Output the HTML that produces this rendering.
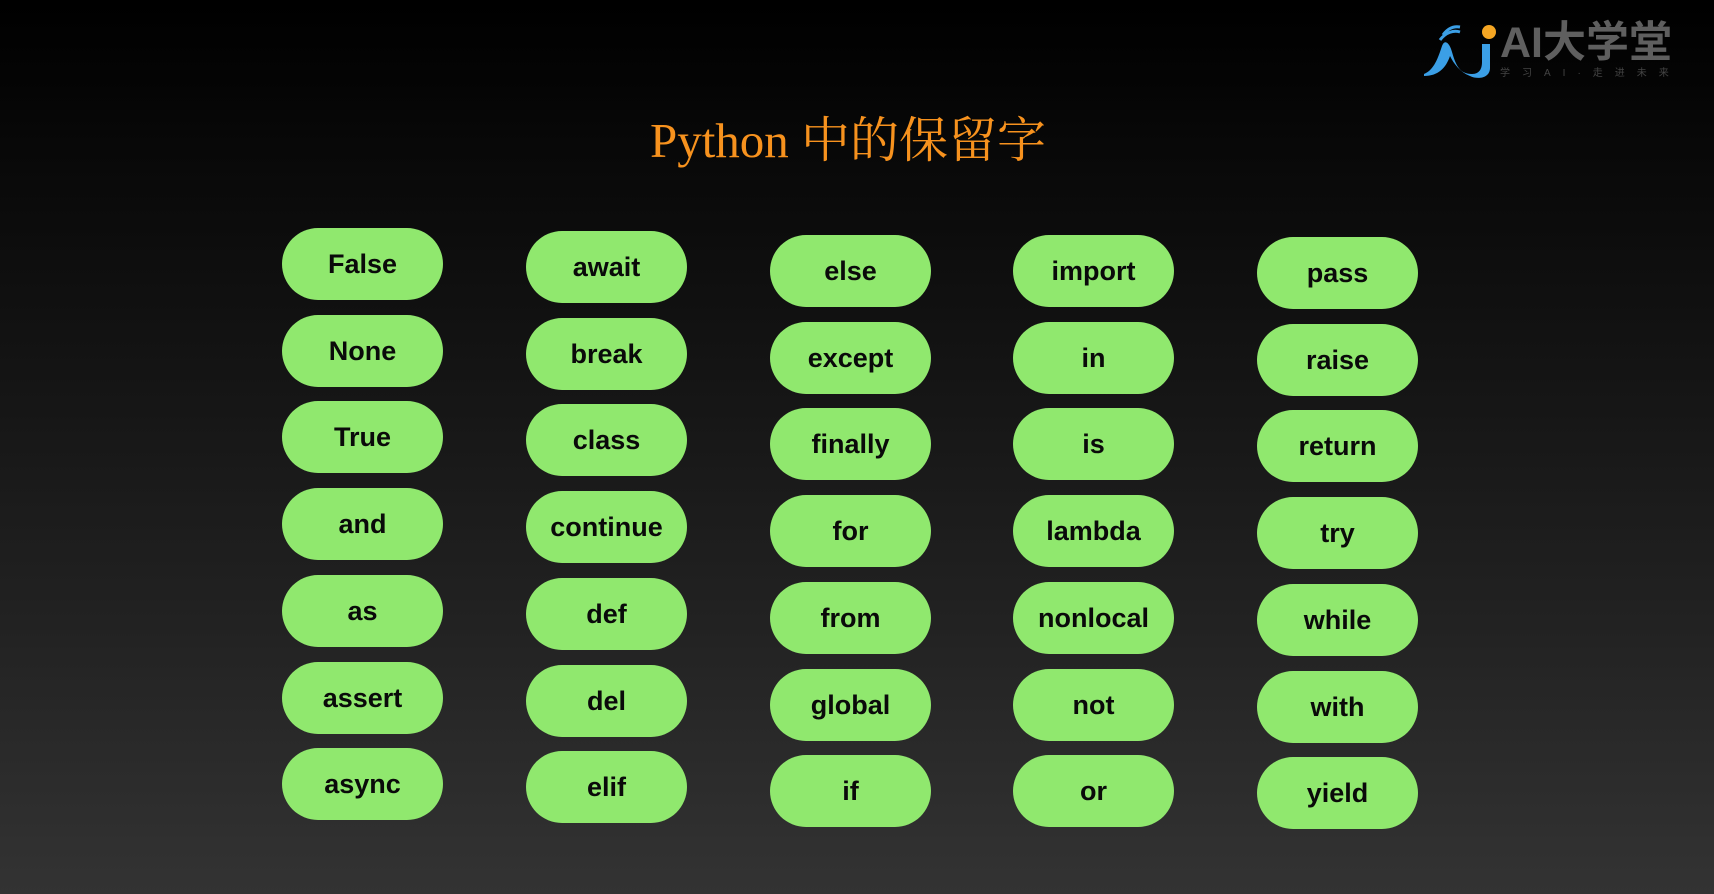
<!DOCTYPE html>
<html><head><meta charset="utf-8"><style>
html,body{margin:0;padding:0}
body{width:1714px;height:894px;overflow:hidden;background:linear-gradient(#000 0%,#0c0c0c 25%,#222 70%,#333 100%);position:relative;font-family:"Liberation Sans","Noto Sans CJK SC",sans-serif}
.t{position:absolute;left:0;width:1696px;top:110px;text-align:center;color:#f7921e;font-family:"Liberation Serif","Noto Serif CJK SC",serif;font-size:49px;line-height:62px}
.p{position:absolute;width:161px;height:72px;border-radius:36px/36px;background:#90e86e;color:#0a0a0a;font-weight:bold;font-size:27px;line-height:72px;text-align:center}
.logo{position:absolute;left:1500px;top:18px;color:#5f5f5f;font-weight:bold;font-size:43px;line-height:50px;letter-spacing:0px}
.sub{position:absolute;left:1500px;top:64px;color:#444;font-size:10px;letter-spacing:12px}
</style></head><body>
<svg style="position:absolute;left:1420px;top:18px" width="80" height="62" viewBox="0 0 80 62">
<path d="M4 56 C14 52 18 40 22 28 C25 20 30 26 32 34 C36 48 40 56 52 56 C60 56 62 50 62 44 L62 26 L70 26 L70 50 C70 60 58 62 50 58 C40 54 34 46 30 38 C26 50 18 58 4 58Z" fill="#3b9fe6"/>
<path d="M20 22 C26 14 34 12 40 14" stroke="#3b9fe6" stroke-width="3" fill="none"/>
<path d="M23 17 C28 10 34 8 40 9" stroke="#3b9fe6" stroke-width="3" fill="none"/>
<circle cx="69" cy="14" r="7" fill="#f5a623"/>
</svg>
<div class="logo">AI大学堂</div>
<div class="sub">学习AI·走进未来</div>
<div class="t">Python 中的保留字</div>
<div class="p" style="left:282px;top:228px">False</div>
<div class="p" style="left:282px;top:315px">None</div>
<div class="p" style="left:282px;top:401px">True</div>
<div class="p" style="left:282px;top:488px">and</div>
<div class="p" style="left:282px;top:575px">as</div>
<div class="p" style="left:282px;top:662px">assert</div>
<div class="p" style="left:282px;top:748px">async</div>
<div class="p" style="left:526px;top:231px">await</div>
<div class="p" style="left:526px;top:318px">break</div>
<div class="p" style="left:526px;top:404px">class</div>
<div class="p" style="left:526px;top:491px">continue</div>
<div class="p" style="left:526px;top:578px">def</div>
<div class="p" style="left:526px;top:665px">del</div>
<div class="p" style="left:526px;top:751px">elif</div>
<div class="p" style="left:770px;top:235px">else</div>
<div class="p" style="left:770px;top:322px">except</div>
<div class="p" style="left:770px;top:408px">finally</div>
<div class="p" style="left:770px;top:495px">for</div>
<div class="p" style="left:770px;top:582px">from</div>
<div class="p" style="left:770px;top:669px">global</div>
<div class="p" style="left:770px;top:755px">if</div>
<div class="p" style="left:1013px;top:235px">import</div>
<div class="p" style="left:1013px;top:322px">in</div>
<div class="p" style="left:1013px;top:408px">is</div>
<div class="p" style="left:1013px;top:495px">lambda</div>
<div class="p" style="left:1013px;top:582px">nonlocal</div>
<div class="p" style="left:1013px;top:669px">not</div>
<div class="p" style="left:1013px;top:755px">or</div>
<div class="p" style="left:1257px;top:237px">pass</div>
<div class="p" style="left:1257px;top:324px">raise</div>
<div class="p" style="left:1257px;top:410px">return</div>
<div class="p" style="left:1257px;top:497px">try</div>
<div class="p" style="left:1257px;top:584px">while</div>
<div class="p" style="left:1257px;top:671px">with</div>
<div class="p" style="left:1257px;top:757px">yield</div>
</body></html>
